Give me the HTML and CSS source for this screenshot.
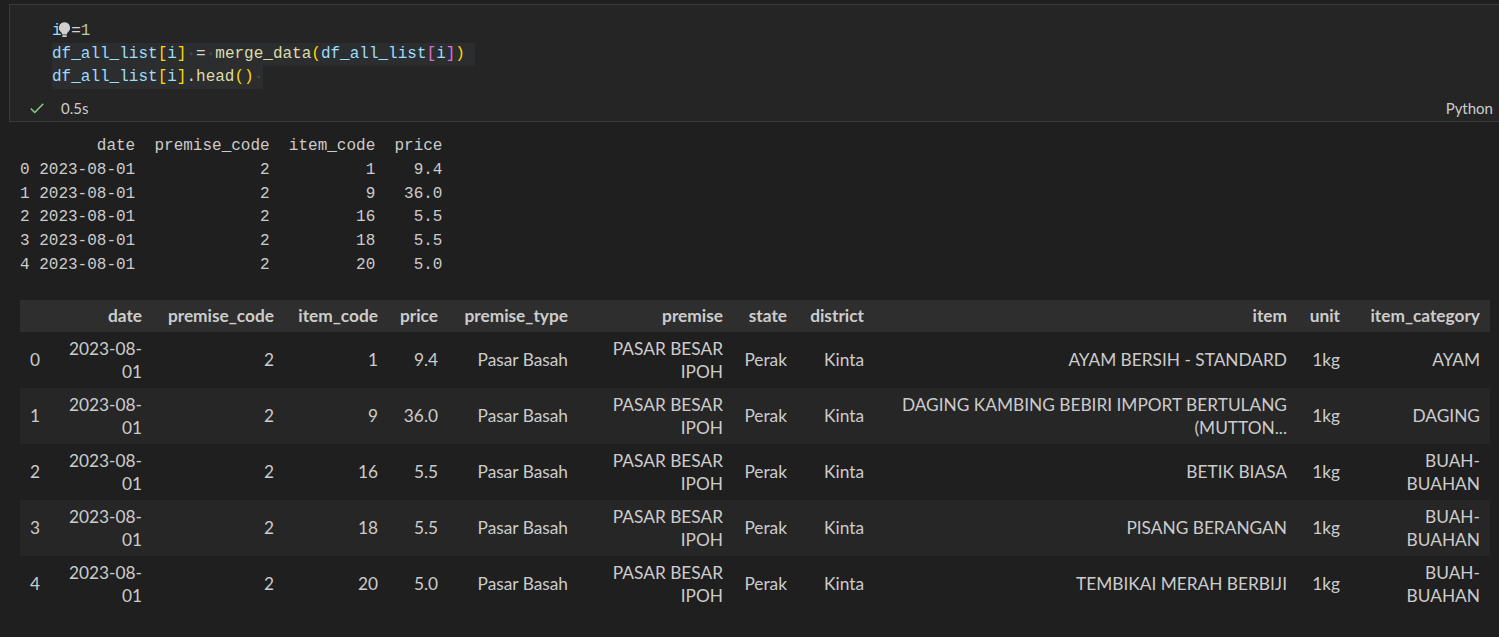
FILE: index.html
```html
<!DOCTYPE html>
<html lang="en">
<head>
<meta charset="utf-8">
<title>Notebook cell</title>
<link rel="stylesheet" href="styles.css">
</head>
<body>
<div class="notebook">
  <div class="cell">
    <div class="editor">
      <div class="code">
        <div class="line"><span class="v">i</span> <span class="o">=</span><span class="n">1</span><svg class="bulb" viewBox="0 0 16 16" width="17" height="17"><path d="M8 1.2a5.2 5.2 0 0 0-3.2 9.3c.6.5.9 1.1.9 1.7v.6h4.6v-.6c0-.6.3-1.2.9-1.7A5.2 5.2 0 0 0 8 1.2z" fill="#d0d0d0"/><rect x="5.9" y="13.3" width="4.2" height="1.8" rx=".6" fill="#d0d0d0"/></svg></div>
        <div class="line"><span class="sel"><span class="v">df_all_list</span><span class="b1">[</span><span class="v">i</span><span class="b1">]</span><span class="ws">·</span><span class="o">=</span><span class="ws">·</span><span class="f">merge_data</span><span class="b1">(</span><span class="v">df_all_list</span><span class="b2">[</span><span class="v">i</span><span class="b2">]</span><span class="b1">)</span> </span></div>
        <div class="line"><span class="sel"><span class="v">df_all_list</span><span class="b1">[</span><span class="v">i</span><span class="b1">]</span><span class="o">.</span><span class="f">head</span><span class="b1">()</span><span class="ws">·</span></span></div>
      </div>
      <div class="status">
        <svg class="check" viewBox="0 0 16 16" width="16" height="16"><path d="M1.8 8.6l3.9 3.9L14.3 3.7" fill="none" stroke="#89d185" stroke-width="1.4"/></svg>
        <span class="time">0.5s</span>
        <span class="lang">Python</span>
      </div>
    </div>
  </div>
  <div class="output">
<pre class="plain">        date  premise_code  item_code  price
0 2023-08-01             2          1    9.4
1 2023-08-01             2          9   36.0
2 2023-08-01             2         16    5.5
3 2023-08-01             2         18    5.5
4 2023-08-01             2         20    5.0</pre>
    <table class="df">
      <colgroup>
        <col class="c-idx"><col class="c-date"><col class="c-pcode"><col class="c-icode"><col class="c-price"><col class="c-ptype"><col class="c-premise"><col class="c-state"><col class="c-district"><col class="c-item"><col class="c-unit"><col class="c-cat">
      </colgroup>
      <thead>
        <tr><th></th><th>date</th><th>premise_code</th><th>item_code</th><th>price</th><th>premise_type</th><th>premise</th><th>state</th><th>district</th><th>item</th><th>unit</th><th>item_category</th></tr>
      </thead>
      <tbody>
        <tr><th>0</th><td>2023-08-01</td><td>2</td><td>1</td><td>9.4</td><td>Pasar Basah</td><td>PASAR BESAR IPOH</td><td>Perak</td><td>Kinta</td><td>AYAM BERSIH - STANDARD</td><td>1kg</td><td>AYAM</td></tr>
        <tr><th>1</th><td>2023-08-01</td><td>2</td><td>9</td><td>36.0</td><td>Pasar Basah</td><td>PASAR BESAR IPOH</td><td>Perak</td><td>Kinta</td><td>DAGING KAMBING BEBIRI IMPORT BERTULANG (MUTTON...</td><td>1kg</td><td>DAGING</td></tr>
        <tr><th>2</th><td>2023-08-01</td><td>2</td><td>16</td><td>5.5</td><td>Pasar Basah</td><td>PASAR BESAR IPOH</td><td>Perak</td><td>Kinta</td><td>BETIK BIASA</td><td>1kg</td><td>BUAH-BUAHAN</td></tr>
        <tr><th>3</th><td>2023-08-01</td><td>2</td><td>18</td><td>5.5</td><td>Pasar Basah</td><td>PASAR BESAR IPOH</td><td>Perak</td><td>Kinta</td><td>PISANG BERANGAN</td><td>1kg</td><td>BUAH-BUAHAN</td></tr>
        <tr><th>4</th><td>2023-08-01</td><td>2</td><td>20</td><td>5.0</td><td>Pasar Basah</td><td>PASAR BESAR IPOH</td><td>Perak</td><td>Kinta</td><td>TEMBIKAI MERAH BERBIJI</td><td>1kg</td><td>BUAH-BUAHAN</td></tr>
      </tbody>
    </table>
  </div>
</div>
</body>
</html>
```

FILE: styles.css
```css
html, body {
  margin: 0;
  padding: 0;
  background: #1f1f1f;
  overflow: hidden;
}

.notebook {
  padding: 4px 0 0 9px;
  color: #cccccc;
  font-family: Lato, "Open Sans", sans-serif;
}

.cell {
  margin-right: -3px;
  border: 1px solid #3a3a3a;
  background: #252525;
}

.editor {
  padding: 15px 0 0 42px;
}

.code {
  position: relative;
  font-family: "Liberation Mono", "DejaVu Sans Mono", monospace;
  font-size: 16px;
  line-height: 23px;
  color: #d4d4d4;
}

.line {
  height: 23px;
  white-space: pre;
}

.sel {
  background: #2c2d2f;
  display: inline-block;
  height: 23px;
}

.v { color: #9cdcfe; }
.f { color: #dcdcaa; }
.o { color: #d4d4d4; }
.n { color: #b5cea8; }
.b1 { color: #ffd700; }
.b2 { color: #da70d6; }
.ws { color: #4a4a4a; }

.bulb {
  position: absolute;
  left: 4px;
  top: 1px;
}

.status {
  display: flex;
  align-items: center;
  height: 22px;
  margin: 8px 0 0 -42px;
  padding: 0 8px 2px 19px;
  font-size: 15px;
  color: #cccccc;
}

.check {
  flex: none;
}

.time {
  margin-left: 16px;
}

.lang {
  margin-left: auto;
}

.output {
  padding: 13px 0 0 11px;
}

.plain {
  margin: 0;
  font-family: "Liberation Mono", "DejaVu Sans Mono", monospace;
  font-size: 16px;
  line-height: 23.8px;
  color: #cccccc;
}

.df {
  margin-top: 22px;
  width: 1470px;
  table-layout: fixed;
  border-collapse: collapse;
  border-spacing: 0;
  font-size: 17.3px;
  line-height: 23px;
  color: #cccccc;
}

.c-idx { width: 32px; }
.c-date { width: 100px; }
.c-pcode { width: 132px; }
.c-icode { width: 104px; }
.c-price { width: 60px; }
.c-ptype { width: 130px; }
.c-premise { width: 155px; }
.c-state { width: 64px; }
.c-district { width: 77px; }
.c-item { width: 423px; }
.c-unit { width: 53px; }
.c-cat { width: 140px; }

.df th,
.df td {
  padding: 5px 10px 5px 10px;
  text-align: right;
  vertical-align: middle;
}

.df thead th {
  padding: 4px 10px 5px 10px;
  font-weight: 700;
  background: #2e2e2e;
}

.df tbody th {
  font-weight: 400;
  text-align: left;
}

.df tbody tr:nth-child(even) {
  background: #262626;
}
```
